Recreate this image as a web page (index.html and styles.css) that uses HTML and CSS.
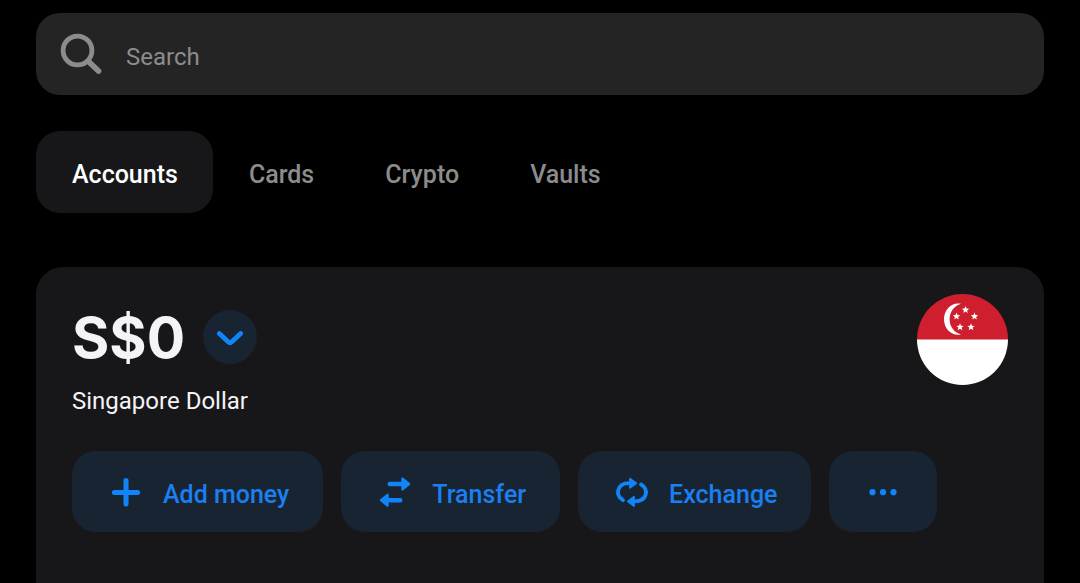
FILE: index.html
```html
<!DOCTYPE html>
<html lang="en">
<head>
<meta charset="utf-8">
<meta name="viewport" content="width=device-width, initial-scale=1">
<title>Accounts</title>
<link rel="stylesheet" href="styles.css">
</head>
<body>
<main class="app">
  <label class="search">
    <svg class="search-icon" viewBox="0 0 42 42" aria-hidden="true">
      <circle cx="17.5" cy="17.5" r="14.4" fill="none" stroke="currentColor" stroke-width="4.8"/>
      <path d="M28.5 28.5L38.5 38" stroke="currentColor" stroke-width="5.8" stroke-linecap="round"/>
    </svg>
    <input class="search-input" type="search" placeholder="Search" aria-label="Search">
  </label>

  <nav class="tabs">
    <button class="tab tab-active" type="button">Accounts</button>
    <button class="tab" type="button">Cards</button>
    <button class="tab" type="button">Crypto</button>
    <button class="tab" type="button">Vaults</button>
  </nav>

  <section class="card">
    <header class="card-head">
      <div class="summary">
        <div class="balance-row">
          <h1 class="balance">S$0</h1>
          <button class="switch" type="button" aria-label="Choose account">
            <svg class="switch-icon" viewBox="0 0 54 54" aria-hidden="true">
              <path d="M16.3 23.5L25.2 31.8Q27 33.5 28.8 31.8L37.7 23.5" fill="none" stroke="currentColor" stroke-width="4.8" stroke-linecap="round" stroke-linejoin="round"/>
            </svg>
          </button>
        </div>
        <p class="currency">Singapore Dollar</p>
      </div>
      <svg class="flag" viewBox="0 0 91 91" role="img" aria-label="Flag of Singapore">
        <defs>
          <clipPath id="disc"><circle cx="45.5" cy="45.5" r="45.5"/></clipPath>
          <path id="star" d="M0 -3.8L1 -1.2L3.7 -1.1L1.6 .6L2.3 3.2L0 1.7L-2.3 3.2L-1.6 .6L-3.7 -1.1L-1 -1.2Z"/>
        </defs>
        <g clip-path="url(#disc)">
          <path d="M0 45H91V91H0Z" fill="#fff"/>
          <path d="M0 0H91V45.5H0Z" fill="#cf1f2e"/>
        </g>
        <g fill="#fff">
          <path d="M44 9.8C34.5 7.8 27 15.8 27 25.3C27 34.8 34.5 42.5 44 40.5C37 38.5 32.6 32.5 32.6 25.3C32.6 18 37 12 44 9.8Z"/>
          <use href="#star" x="48.5" y="15.8"/>
          <use href="#star" x="39.5" y="22.3"/>
          <use href="#star" x="57.5" y="22.3"/>
          <use href="#star" x="43" y="33"/>
          <use href="#star" x="54" y="33"/>
        </g>
      </svg>
    </header>

    <div class="actions">
      <button class="action" type="button">
        <svg class="action-icon" viewBox="0 0 36 36" aria-hidden="true">
          <path d="M6.4 18.4H29.6M18 6.6V30" stroke="currentColor" stroke-width="5" stroke-linecap="round"/>
        </svg>
        <span class="action-label">Add money</span>
      </button>
      <button class="action" type="button">
        <svg class="action-icon" viewBox="0 0 36 36" aria-hidden="true">
          <path d="M12.7 10H25M11 26.2H23.3" stroke="currentColor" stroke-width="4.4" stroke-linecap="round"/>
          <path d="M25.5 4.6L32 10L25.5 15.4ZM10.5 20.8L4 26.2L10.5 31.6Z" fill="currentColor" stroke="currentColor" stroke-width="2.4" stroke-linejoin="round"/>
        </svg>
        <span class="action-label">Transfer</span>
      </button>
      <button class="action" type="button">
        <svg class="action-icon" viewBox="0 0 36 36" aria-hidden="true">
          <path d="M9 26.2C0.5 20.8 3.2 9.4 15 9.2M27 10.4C35.5 15.8 32.8 27.2 21 27.4" fill="none" stroke="currentColor" stroke-width="3.8" stroke-linecap="round"/>
          <path d="M16 4.6L22.2 9.2L16 13.8ZM20 22.8L13.8 27.4L20 32Z" fill="currentColor" stroke="currentColor" stroke-width="1.8" stroke-linejoin="round"/>
        </svg>
        <span class="action-label">Exchange</span>
      </button>
      <button class="action action-more" type="button" aria-label="More">
        <svg class="action-icon" viewBox="0 0 36 36" fill="currentColor" aria-hidden="true">
          <circle cx="7.5" cy="18.2" r="3.1"/><circle cx="18" cy="18.2" r="3.1"/><circle cx="28.5" cy="18.2" r="3.1"/>
        </svg>
      </button>
    </div>
  </section>
</main>
</body>
</html>
```
FILE: styles.css
```css
* {
  box-sizing: border-box;
}

body {
  margin: 0;
  background: #000;
  color: #f4f4f6;
  font-family: Roboto, "Liberation Sans", sans-serif;
  font-size: 24px;
  line-height: 30px;
}

button,
input {
  border: 0;
  background: none;
  color: inherit;
  font: inherit;
}

.app {
  display: flex;
  flex-direction: column;
  min-height: 100vh;
  padding: 13px 36px 0;
}

.search {
  display: flex;
  align-items: center;
  gap: 24px;
  padding: 20px 24px;
  border-radius: 24px;
  background: #242424;
  color: #8c8c8c;
}

.search-icon {
  flex: none;
  width: 42px;
  height: 42px;
}

.search-input {
  flex: 1;
  min-width: 0;
  padding: 6px 0 0;
  outline: 0;
}

.search-input::placeholder {
  color: #8c8c8c;
  opacity: 1;
}

.tabs {
  display: flex;
  margin-top: 36px;
}

.tab {
  padding: 29px 35px 23px 36px;
  border-radius: 24px;
  color: #8c8c8c;
  font-size: 25px;
  font-weight: 500;
}

.tab-active {
  background: #17171a;
  color: #fff;
}

.card {
  flex: 1;
  margin-top: 54px;
  padding: 27px 36px 50px;
  border-radius: 27px 27px 0 0;
  background: #17171a;
}

.card-head {
  display: flex;
  justify-content: space-between;
  align-items: flex-start;
}

.summary {
  padding-top: 16px;
}

.balance-row {
  display: flex;
  align-items: center;
  gap: 18px;
}

.balance {
  margin: 0;
  padding-top: 2px;
  font-family: Inter, "Liberation Sans", sans-serif;
  font-size: 57px;
  font-weight: 700;
  line-height: 52px;
}

.switch {
  width: 54px;
  height: 54px;
  padding: 0;
  border-radius: 50%;
  background: #182431;
  color: #1284fa;
}

.switch-icon {
  display: block;
}

.currency {
  margin: 22px 0 0;
}

.flag {
  flex: none;
  width: 91px;
  height: 91px;
}

.actions {
  display: flex;
  flex-wrap: wrap;
  gap: 18px;
  margin-top: 35px;
}

.action {
  display: flex;
  align-items: center;
  gap: 19px;
  padding: 23px 34px 22px 36px;
  border-radius: 24px;
  background: #182431;
  color: #1a7ff0;
  font-size: 25px;
  font-weight: 500;
}

.action-more {
  padding-right: 36px;
}

.action-label {
  padding-top: 5px;
}

.action-icon {
  width: 36px;
  height: 36px;
  color: #1284fa;
}
```
